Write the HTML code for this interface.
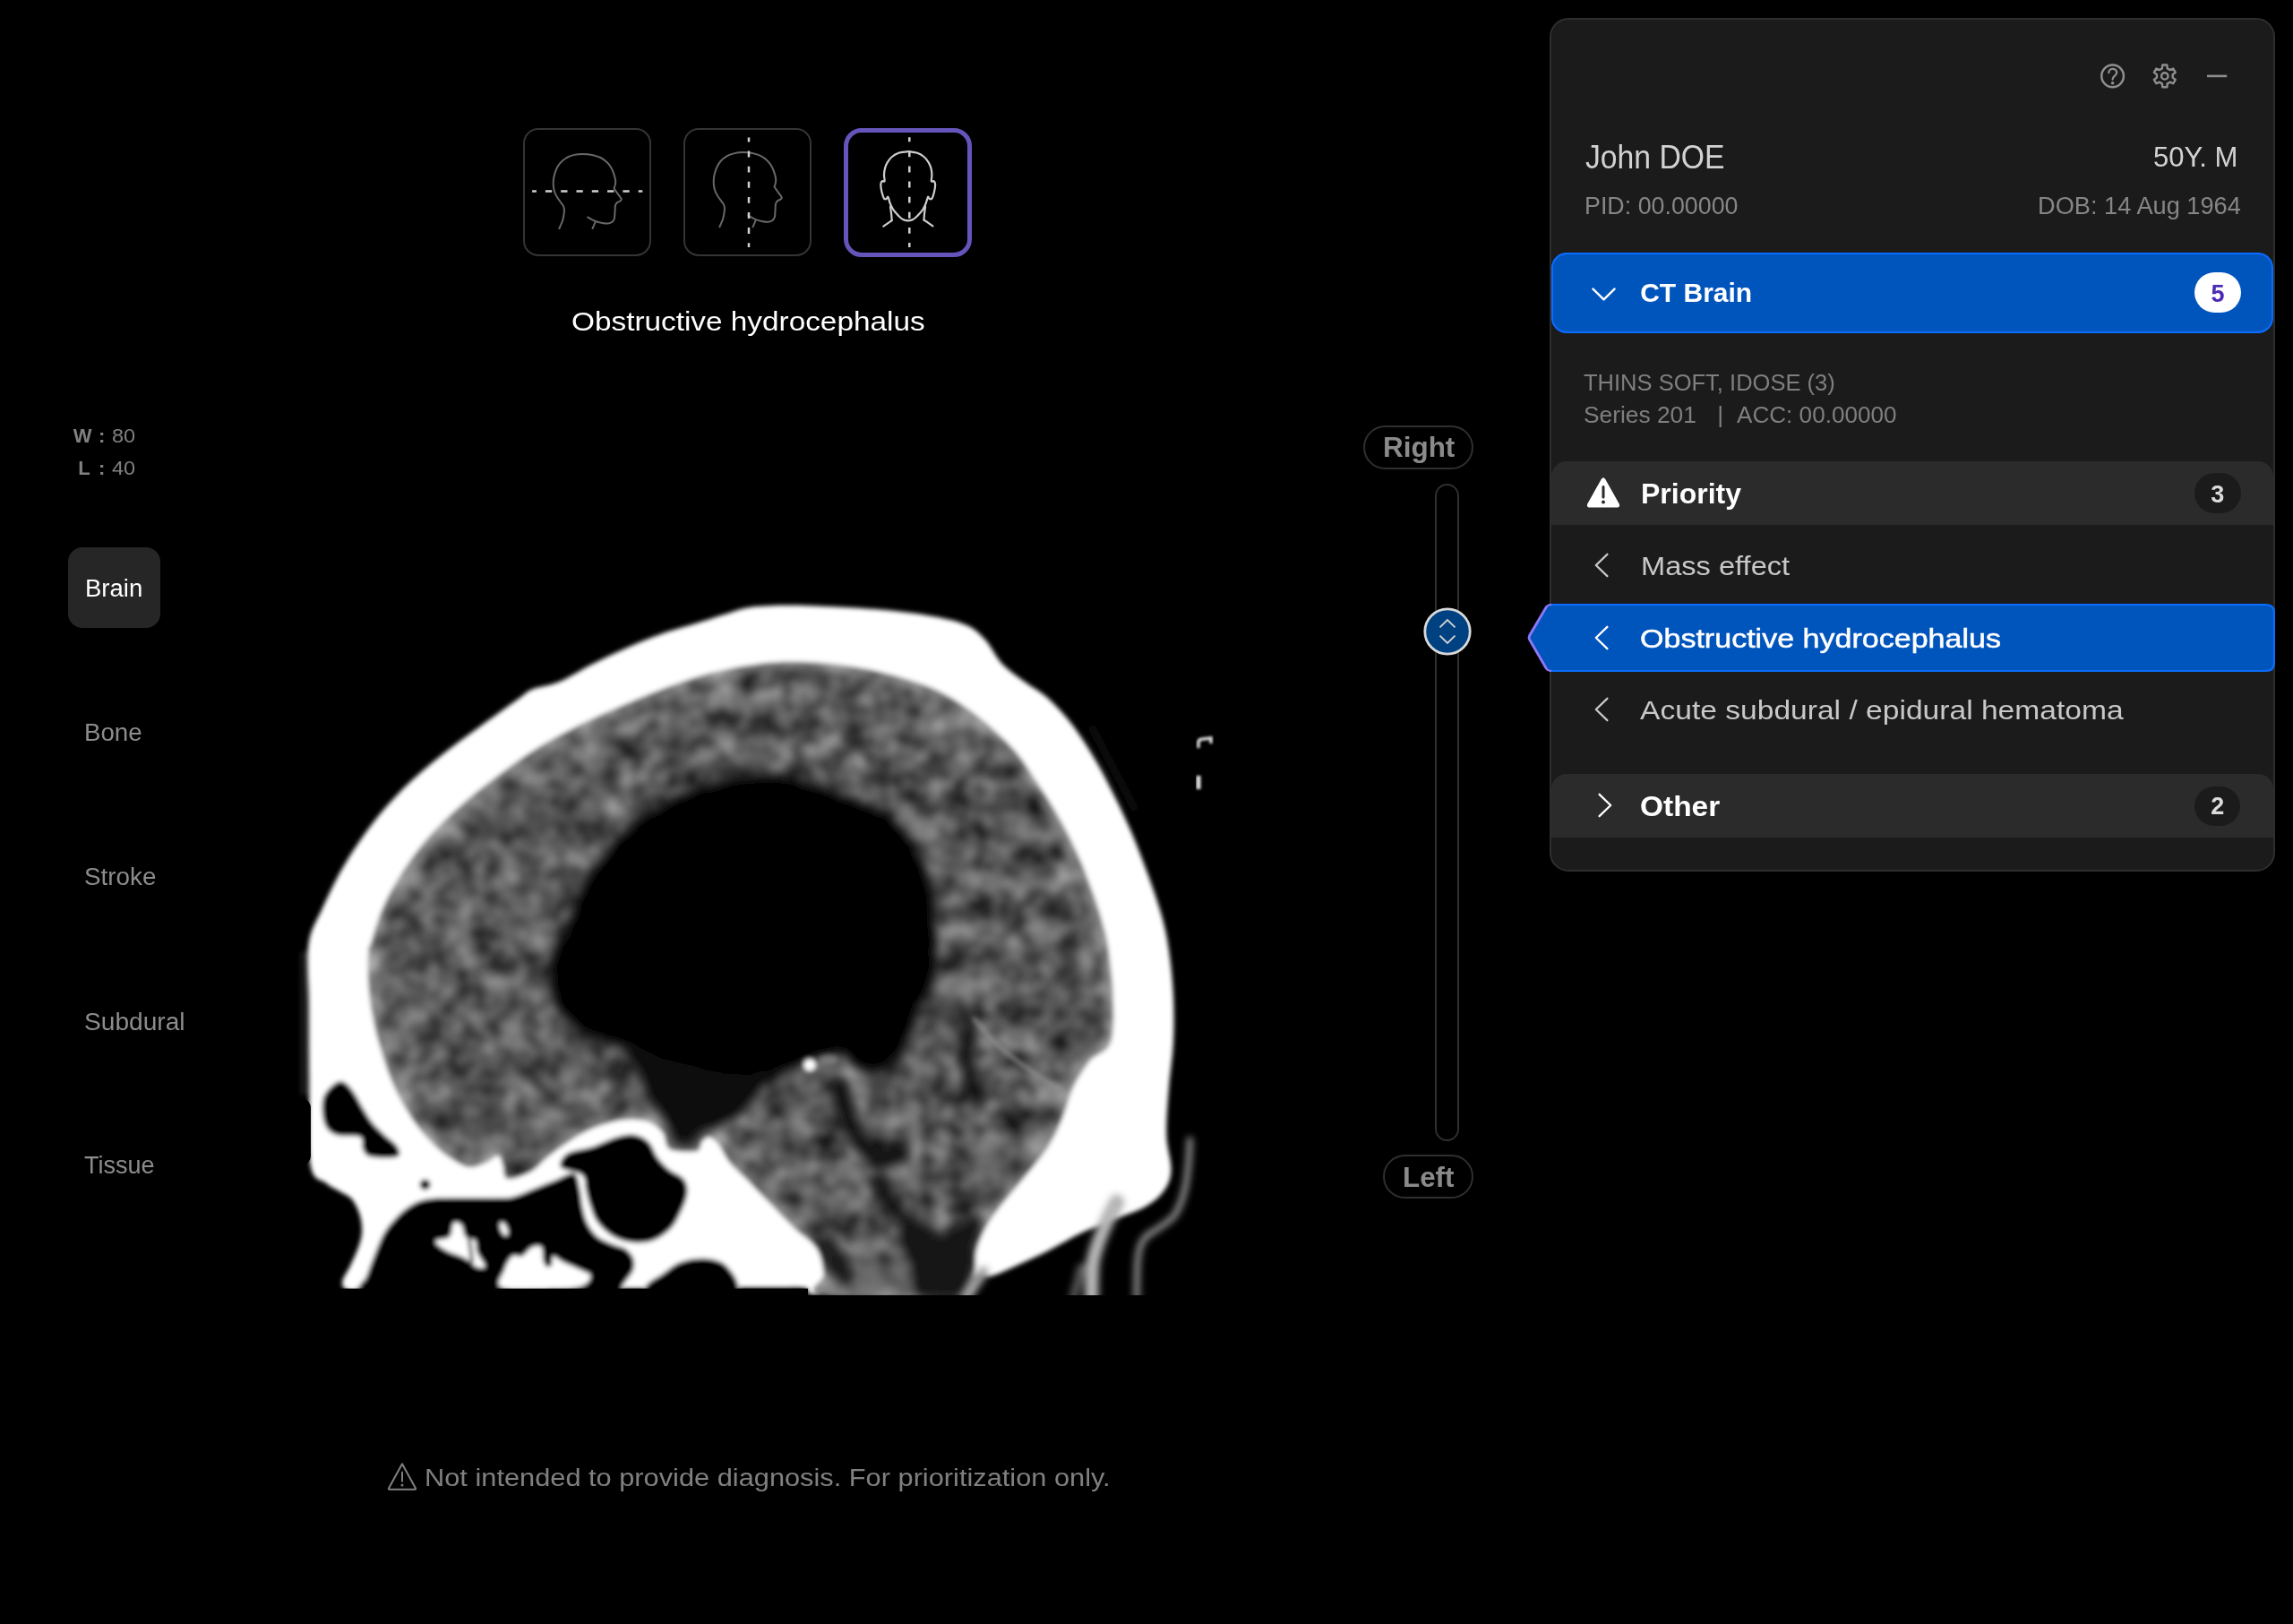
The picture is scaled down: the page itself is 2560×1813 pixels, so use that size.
<!DOCTYPE html>
<html lang="en"><head><meta charset="utf-8"><title>CT Brain viewer</title>
<style>
html,body{margin:0;padding:0;background:#000;}
body{width:2560px;height:1813px;position:relative;overflow:hidden;font-family:"Liberation Sans",sans-serif;}
.t{position:absolute;white-space:nowrap;line-height:1;transform-origin:0 0;}
.abs{position:absolute;}
.box{position:absolute;box-sizing:border-box;}
svg{position:absolute;overflow:visible;}
</style></head><body>

<svg width="2560" height="1813" viewBox="0 0 2560 1813" style="left:0;top:0">
<defs>
<filter id="bl" x="-5%" y="-5%" width="110%" height="110%"><feGaussianBlur stdDeviation="2.6"/></filter>
<filter id="bl2" x="-20%" y="-20%" width="140%" height="140%"><feGaussianBlur stdDeviation="5"/></filter>
<filter id="bl3" x="-10%" y="-10%" width="120%" height="120%"><feGaussianBlur stdDeviation="3.2"/></filter>
<filter id="bl6" x="-10%" y="-10%" width="120%" height="120%"><feGaussianBlur stdDeviation="6"/></filter>
<filter id="bl1" x="-20%" y="-20%" width="140%" height="140%"><feGaussianBlur stdDeviation="1.6"/></filter>
<filter id="tex" x="0" y="0" width="100%" height="100%" color-interpolation-filters="sRGB">
<feTurbulence type="fractalNoise" baseFrequency="0.034" numOctaves="2" seed="11" result="n"/>
<feColorMatrix in="n" type="matrix" values="0.6 0.28 0 0 -0.095  0.6 0.28 0 0 -0.095  0.6 0.28 0 0 -0.095  0 0 0 0 1" result="g"/>
<feComposite in="g" in2="SourceGraphic" operator="in"/>
</filter>
<clipPath id="ctclip"><rect x="330" y="640" width="1060" height="805.5"/></clipPath>
<clipPath id="brainclip"><path d="M411.2,1060.0C410.8,1067.5 410.3,1085.9 411.2,1098.8C412.1,1111.7 414.2,1126.0 416.4,1137.6C418.6,1149.2 421.2,1158.2 424.2,1168.6C427.2,1178.9 430.6,1189.8 434.5,1199.7C438.4,1209.6 442.2,1218.6 447.4,1228.1C452.6,1237.6 459.0,1248.0 465.5,1256.6C472.0,1265.2 479.3,1273.4 486.2,1279.9C493.1,1286.4 500.4,1291.5 506.9,1295.4C513.4,1299.3 519.0,1302.7 525.0,1303.1C531.0,1303.5 537.9,1300.2 543.1,1298.0C548.3,1295.8 553.1,1289.8 556.1,1290.2C559.1,1290.6 559.6,1296.3 561.3,1300.6C563.0,1304.9 561.2,1314.8 566.4,1316.1C571.6,1317.4 585.0,1312.2 592.3,1308.3C599.6,1304.4 603.9,1298.0 610.4,1292.8C616.9,1287.6 623.3,1282.5 631.1,1277.3C638.9,1272.1 648.4,1265.9 657.0,1261.8C665.6,1257.7 675.0,1254.7 682.8,1252.7C690.5,1250.8 696.6,1250.1 703.5,1250.1C710.4,1250.1 718.2,1250.3 724.2,1252.7C730.2,1255.1 736.2,1259.8 739.7,1264.3C743.2,1268.8 742.3,1276.5 744.9,1279.9C747.5,1283.4 749.7,1284.2 755.3,1285.0C760.9,1285.8 773.8,1286.7 778.5,1285.0C783.2,1283.3 781.5,1277.3 783.7,1274.7C785.9,1272.1 788.5,1269.1 791.5,1269.5C794.5,1269.9 797.9,1272.5 801.8,1277.3C805.7,1282.0 809.5,1291.5 814.7,1298.0C819.9,1304.5 825.4,1308.4 832.9,1316.1C840.4,1323.8 851.2,1335.0 860.0,1344.0C868.8,1353.0 877.3,1362.1 885.9,1370.4C894.5,1378.7 906.1,1385.1 911.7,1393.7C917.3,1402.3 918.4,1413.4 919.5,1422.1C920.6,1430.8 892.8,1442.0 918.2,1446.0C943.6,1450.0 1043.9,1450.0 1072.1,1446.0C1100.3,1442.0 1084.6,1430.4 1087.6,1422.1C1090.6,1413.8 1088.0,1404.9 1090.2,1396.3C1092.4,1387.7 1095.8,1379.0 1100.6,1370.4C1105.3,1361.8 1111.4,1354.0 1118.7,1344.5C1126.0,1335.0 1135.9,1324.3 1144.5,1313.5C1153.1,1302.7 1163.5,1290.7 1170.4,1279.9C1177.3,1269.1 1181.2,1260.0 1185.9,1248.8C1190.7,1237.6 1193.7,1223.4 1198.9,1212.6C1204.1,1201.8 1210.1,1192.4 1217.0,1184.2C1223.9,1176.0 1235.9,1175.6 1240.2,1163.5C1244.5,1151.4 1243.2,1129.0 1242.8,1111.7C1242.4,1094.5 1239.4,1072.7 1237.7,1060.0C1236.0,1047.3 1235.1,1045.5 1232.5,1035.8C1229.9,1026.1 1226.8,1015.5 1222.1,1002.1C1217.3,988.7 1210.5,970.2 1204.0,955.6C1197.5,941.0 1191.0,928.0 1183.3,914.2C1175.5,900.4 1166.1,885.7 1157.5,872.8C1148.9,859.9 1142.4,848.7 1131.6,836.6C1120.8,824.5 1105.7,810.8 1092.8,800.4C1079.9,790.0 1066.9,781.4 1054.0,774.5C1041.1,767.6 1030.3,763.7 1015.2,759.0C1000.1,754.3 980.8,749.3 963.5,746.1C946.2,742.9 929.0,740.7 911.7,739.6C894.5,738.5 877.9,738.1 860.0,739.6C842.1,741.1 822.3,744.5 804.4,748.6C786.5,752.7 770.0,758.2 752.7,764.2C735.5,770.2 718.1,777.6 700.9,784.9C683.6,792.2 666.4,799.5 649.2,808.1C632.0,816.7 613.5,826.7 597.5,836.6C581.5,846.5 567.7,856.8 553.5,867.6C539.3,878.4 525.0,889.6 512.1,901.3C499.2,912.9 486.7,925.0 475.9,937.5C465.1,950.0 455.6,963.4 447.4,976.3C439.2,989.2 432.3,1002.1 426.7,1015.0C421.1,1027.9 416.4,1046.4 413.8,1053.9C411.2,1061.4 411.6,1052.5 411.2,1060.0Z"/></clipPath>
</defs>
<g clip-path="url(#ctclip)">
<g filter="url(#bl)">
<path d="M388.7,1440.0C382.4,1438.6 381.8,1435.2 382.2,1430.8C382.6,1426.4 388.0,1419.6 390.9,1413.4C393.8,1407.2 397.4,1400.0 399.6,1393.8C401.8,1387.6 403.6,1382.5 404.0,1376.3C404.4,1370.1 403.6,1362.9 401.8,1356.7C400.0,1350.5 396.6,1343.4 393.0,1339.0C389.4,1334.6 384.7,1333.5 380.0,1330.5C375.3,1327.5 370.3,1326.3 364.7,1321.3C359.1,1316.3 349.8,1320.0 346.6,1300.6C343.4,1281.2 345.6,1235.0 345.3,1204.9C345.0,1174.8 345.1,1145.2 345.0,1120.0C344.9,1094.8 342.1,1071.4 344.5,1053.9C346.9,1036.4 353.1,1029.2 359.5,1015.0C365.9,1000.8 373.8,984.0 382.8,968.5C391.9,953.0 402.6,936.6 413.8,922.0C425.0,907.4 437.1,893.6 450.0,880.6C462.9,867.6 477.6,855.5 491.4,844.3C505.2,833.1 518.1,824.1 532.8,813.3C547.5,802.5 569.0,787.0 579.4,779.7C589.8,772.4 587.6,772.3 594.9,769.3C602.2,766.3 612.1,766.3 623.3,761.6C634.5,756.9 649.2,747.4 662.1,740.9C675.0,734.4 688.0,728.4 700.9,722.8C713.8,717.2 726.8,711.8 739.7,707.3C752.6,702.8 767.3,699.0 778.5,695.6C789.7,692.2 797.9,689.4 807.0,686.6C816.1,683.8 824.1,680.5 832.9,678.8C841.7,677.1 848.1,676.6 860.0,676.2C871.9,675.8 884.6,675.6 904.0,676.2C923.4,676.9 953.6,678.2 976.4,680.1C999.2,682.0 1023.8,684.9 1041.0,687.9C1058.2,690.9 1070.0,693.7 1079.9,698.2C1089.8,702.7 1094.1,707.9 1100.6,715.0C1107.1,722.1 1111.4,733.1 1118.7,740.9C1126.0,748.7 1135.9,755.1 1144.5,761.6C1153.1,768.1 1161.8,772.0 1170.4,779.7C1179.0,787.5 1187.7,796.9 1196.3,808.1C1204.9,819.3 1214.3,834.0 1222.1,846.9C1229.8,859.8 1235.9,871.9 1242.8,885.7C1249.7,899.5 1257.0,914.6 1263.5,929.7C1270.0,944.8 1276.0,960.8 1281.6,976.3C1287.2,991.8 1293.2,1008.8 1297.1,1022.8C1301.0,1036.8 1302.8,1045.2 1304.9,1060.0C1307.1,1074.8 1309.2,1094.5 1310.0,1111.7C1310.8,1129.0 1310.8,1146.2 1310.0,1163.5C1309.2,1180.8 1306.2,1198.0 1304.9,1215.2C1303.6,1232.4 1301.9,1251.8 1302.3,1266.9C1302.7,1282.0 1307.9,1295.4 1307.5,1305.7C1307.1,1316.0 1304.5,1322.1 1299.7,1329.0C1295.0,1335.9 1287.6,1341.9 1279.0,1347.1C1270.4,1352.3 1259.6,1355.2 1248.0,1360.0C1236.4,1364.8 1222.1,1369.5 1209.2,1375.6C1196.3,1381.6 1183.3,1389.8 1170.4,1396.3C1157.5,1402.8 1142.4,1409.7 1131.6,1414.4C1120.8,1419.1 1112.2,1423.4 1105.7,1424.7C1099.2,1426.0 1096.2,1421.2 1092.8,1422.1C1089.3,1423.0 1088.5,1426.0 1085.0,1430.0C1081.5,1434.0 1100.0,1443.3 1072.0,1446.0C1044.0,1448.7 945.7,1447.3 917.0,1446.0C888.3,1444.7 909.5,1439.4 900.0,1438.0C890.5,1436.6 893.3,1437.4 860.0,1437.5C826.7,1437.6 760.0,1438.3 700.0,1438.5C640.0,1438.7 546.7,1438.4 500.0,1438.5C453.3,1438.6 438.6,1438.8 420.0,1439.0C401.4,1439.2 395.0,1441.4 388.7,1440.0Z" fill="#fff"/>
<path d="M411.2,1060.0C410.8,1067.5 410.3,1085.9 411.2,1098.8C412.1,1111.7 414.2,1126.0 416.4,1137.6C418.6,1149.2 421.2,1158.2 424.2,1168.6C427.2,1178.9 430.6,1189.8 434.5,1199.7C438.4,1209.6 442.2,1218.6 447.4,1228.1C452.6,1237.6 459.0,1248.0 465.5,1256.6C472.0,1265.2 479.3,1273.4 486.2,1279.9C493.1,1286.4 500.4,1291.5 506.9,1295.4C513.4,1299.3 519.0,1302.7 525.0,1303.1C531.0,1303.5 537.9,1300.2 543.1,1298.0C548.3,1295.8 553.1,1289.8 556.1,1290.2C559.1,1290.6 559.6,1296.3 561.3,1300.6C563.0,1304.9 561.2,1314.8 566.4,1316.1C571.6,1317.4 585.0,1312.2 592.3,1308.3C599.6,1304.4 603.9,1298.0 610.4,1292.8C616.9,1287.6 623.3,1282.5 631.1,1277.3C638.9,1272.1 648.4,1265.9 657.0,1261.8C665.6,1257.7 675.0,1254.7 682.8,1252.7C690.5,1250.8 696.6,1250.1 703.5,1250.1C710.4,1250.1 718.2,1250.3 724.2,1252.7C730.2,1255.1 736.2,1259.8 739.7,1264.3C743.2,1268.8 742.3,1276.5 744.9,1279.9C747.5,1283.4 749.7,1284.2 755.3,1285.0C760.9,1285.8 773.8,1286.7 778.5,1285.0C783.2,1283.3 781.5,1277.3 783.7,1274.7C785.9,1272.1 788.5,1269.1 791.5,1269.5C794.5,1269.9 797.9,1272.5 801.8,1277.3C805.7,1282.0 809.5,1291.5 814.7,1298.0C819.9,1304.5 825.4,1308.4 832.9,1316.1C840.4,1323.8 851.2,1335.0 860.0,1344.0C868.8,1353.0 877.3,1362.1 885.9,1370.4C894.5,1378.7 906.1,1385.1 911.7,1393.7C917.3,1402.3 918.4,1413.4 919.5,1422.1C920.6,1430.8 892.8,1442.0 918.2,1446.0C943.6,1450.0 1043.9,1450.0 1072.1,1446.0C1100.3,1442.0 1084.6,1430.4 1087.6,1422.1C1090.6,1413.8 1088.0,1404.9 1090.2,1396.3C1092.4,1387.7 1095.8,1379.0 1100.6,1370.4C1105.3,1361.8 1111.4,1354.0 1118.7,1344.5C1126.0,1335.0 1135.9,1324.3 1144.5,1313.5C1153.1,1302.7 1163.5,1290.7 1170.4,1279.9C1177.3,1269.1 1181.2,1260.0 1185.9,1248.8C1190.7,1237.6 1193.7,1223.4 1198.9,1212.6C1204.1,1201.8 1210.1,1192.4 1217.0,1184.2C1223.9,1176.0 1235.9,1175.6 1240.2,1163.5C1244.5,1151.4 1243.2,1129.0 1242.8,1111.7C1242.4,1094.5 1239.4,1072.7 1237.7,1060.0C1236.0,1047.3 1235.1,1045.5 1232.5,1035.8C1229.9,1026.1 1226.8,1015.5 1222.1,1002.1C1217.3,988.7 1210.5,970.2 1204.0,955.6C1197.5,941.0 1191.0,928.0 1183.3,914.2C1175.5,900.4 1166.1,885.7 1157.5,872.8C1148.9,859.9 1142.4,848.7 1131.6,836.6C1120.8,824.5 1105.7,810.8 1092.8,800.4C1079.9,790.0 1066.9,781.4 1054.0,774.5C1041.1,767.6 1030.3,763.7 1015.2,759.0C1000.1,754.3 980.8,749.3 963.5,746.1C946.2,742.9 929.0,740.7 911.7,739.6C894.5,738.5 877.9,738.1 860.0,739.6C842.1,741.1 822.3,744.5 804.4,748.6C786.5,752.7 770.0,758.2 752.7,764.2C735.5,770.2 718.1,777.6 700.9,784.9C683.6,792.2 666.4,799.5 649.2,808.1C632.0,816.7 613.5,826.7 597.5,836.6C581.5,846.5 567.7,856.8 553.5,867.6C539.3,878.4 525.0,889.6 512.1,901.3C499.2,912.9 486.7,925.0 475.9,937.5C465.1,950.0 455.6,963.4 447.4,976.3C439.2,989.2 432.3,1002.1 426.7,1015.0C421.1,1027.9 416.4,1046.4 413.8,1053.9C411.2,1061.4 411.6,1052.5 411.2,1060.0Z" fill="#fff" filter="url(#tex)"/>
<g clip-path="url(#brainclip)">
<path d="M695.0,1166.0C697.2,1163.2 714.2,1174.0 725.0,1178.0C735.8,1182.0 748.3,1186.5 760.0,1190.0C771.7,1193.5 783.3,1197.0 795.0,1199.0C806.7,1201.0 818.2,1202.8 830.0,1202.0C841.8,1201.2 862.7,1191.8 866.0,1194.0C869.3,1196.2 856.0,1207.2 850.0,1215.0C844.0,1222.8 837.7,1234.1 830.0,1241.0C822.3,1247.9 811.3,1252.3 804.0,1256.6C796.7,1260.9 790.2,1262.4 786.0,1267.0C781.8,1271.6 783.7,1281.2 778.5,1284.0C773.3,1286.8 760.6,1287.3 755.0,1284.0C749.4,1280.7 747.5,1270.3 745.0,1264.0C742.5,1257.7 743.5,1252.4 740.0,1246.0C736.5,1239.6 728.7,1234.1 724.0,1225.5C719.3,1216.9 716.8,1204.4 712.0,1194.5C707.2,1184.6 692.8,1168.8 695.0,1166.0Z" fill="#0a0a0a" filter="url(#bl2)"/>
<path d="M411.2,1060.0C410.8,1067.5 410.3,1085.9 411.2,1098.8C412.1,1111.7 414.2,1126.0 416.4,1137.6C418.6,1149.2 421.2,1158.2 424.2,1168.6C427.2,1178.9 430.6,1189.8 434.5,1199.7C438.4,1209.6 442.2,1218.6 447.4,1228.1C452.6,1237.6 459.0,1248.0 465.5,1256.6C472.0,1265.2 479.3,1273.4 486.2,1279.9C493.1,1286.4 500.4,1291.5 506.9,1295.4C513.4,1299.3 519.0,1302.7 525.0,1303.1C531.0,1303.5 537.9,1300.2 543.1,1298.0C548.3,1295.8 553.1,1289.8 556.1,1290.2C559.1,1290.6 559.6,1296.3 561.3,1300.6C563.0,1304.9 561.2,1314.8 566.4,1316.1C571.6,1317.4 585.0,1312.2 592.3,1308.3C599.6,1304.4 603.9,1298.0 610.4,1292.8C616.9,1287.6 623.3,1282.5 631.1,1277.3C638.9,1272.1 648.4,1265.9 657.0,1261.8C665.6,1257.7 675.0,1254.7 682.8,1252.7C690.5,1250.8 696.6,1250.1 703.5,1250.1C710.4,1250.1 718.2,1250.3 724.2,1252.7C730.2,1255.1 736.2,1259.8 739.7,1264.3C743.2,1268.8 742.3,1276.5 744.9,1279.9C747.5,1283.4 749.7,1284.2 755.3,1285.0C760.9,1285.8 773.8,1286.7 778.5,1285.0C783.2,1283.3 781.5,1277.3 783.7,1274.7C785.9,1272.1 788.5,1269.1 791.5,1269.5C794.5,1269.9 797.9,1272.5 801.8,1277.3C805.7,1282.0 809.5,1291.5 814.7,1298.0C819.9,1304.5 825.4,1308.4 832.9,1316.1C840.4,1323.8 851.2,1335.0 860.0,1344.0C868.8,1353.0 877.3,1362.1 885.9,1370.4C894.5,1378.7 906.1,1385.1 911.7,1393.7C917.3,1402.3 918.4,1413.4 919.5,1422.1C920.6,1430.8 892.8,1442.0 918.2,1446.0C943.6,1450.0 1043.9,1450.0 1072.1,1446.0C1100.3,1442.0 1084.6,1430.4 1087.6,1422.1C1090.6,1413.8 1088.0,1404.9 1090.2,1396.3C1092.4,1387.7 1095.8,1379.0 1100.6,1370.4C1105.3,1361.8 1111.4,1354.0 1118.7,1344.5C1126.0,1335.0 1135.9,1324.3 1144.5,1313.5C1153.1,1302.7 1163.5,1290.7 1170.4,1279.9C1177.3,1269.1 1181.2,1260.0 1185.9,1248.8C1190.7,1237.6 1193.7,1223.4 1198.9,1212.6C1204.1,1201.8 1210.1,1192.4 1217.0,1184.2C1223.9,1176.0 1235.9,1175.6 1240.2,1163.5C1244.5,1151.4 1243.2,1129.0 1242.8,1111.7C1242.4,1094.5 1239.4,1072.7 1237.7,1060.0C1236.0,1047.3 1235.1,1045.5 1232.5,1035.8C1229.9,1026.1 1226.8,1015.5 1222.1,1002.1C1217.3,988.7 1210.5,970.2 1204.0,955.6C1197.5,941.0 1191.0,928.0 1183.3,914.2C1175.5,900.4 1166.1,885.7 1157.5,872.8C1148.9,859.9 1142.4,848.7 1131.6,836.6C1120.8,824.5 1105.7,810.8 1092.8,800.4C1079.9,790.0 1066.9,781.4 1054.0,774.5C1041.1,767.6 1030.3,763.7 1015.2,759.0C1000.1,754.3 980.8,749.3 963.5,746.1C946.2,742.9 929.0,740.7 911.7,739.6C894.5,738.5 877.9,738.1 860.0,739.6C842.1,741.1 822.3,744.5 804.4,748.6C786.5,752.7 770.0,758.2 752.7,764.2C735.5,770.2 718.1,777.6 700.9,784.9C683.6,792.2 666.4,799.5 649.2,808.1C632.0,816.7 613.5,826.7 597.5,836.6C581.5,846.5 567.7,856.8 553.5,867.6C539.3,878.4 525.0,889.6 512.1,901.3C499.2,912.9 486.7,925.0 475.9,937.5C465.1,950.0 455.6,963.4 447.4,976.3C439.2,989.2 432.3,1002.1 426.7,1015.0C421.1,1027.9 416.4,1046.4 413.8,1053.9C411.2,1061.4 411.6,1052.5 411.2,1060.0Z" fill="none" stroke="#fff" stroke-width="16" opacity="0.3" filter="url(#bl6)"/>
<path d="M631.0,1040.0C635.7,1028.3 638.0,1014.9 644.0,1002.1C650.0,989.3 657.8,976.2 667.3,963.3C676.8,950.4 688.8,935.3 700.9,924.5C713.0,913.7 726.8,906.0 739.7,898.7C752.6,891.4 765.6,885.4 778.5,880.6C791.4,875.9 803.7,872.8 817.3,870.2C830.9,867.6 846.4,864.6 860.0,865.0C873.6,865.4 885.9,869.3 898.8,872.8C911.7,876.2 924.7,881.0 937.6,885.7C950.5,890.5 965.6,895.7 976.4,901.3C987.2,906.9 995.0,912.1 1002.3,919.4C1009.6,926.7 1014.8,935.7 1020.4,945.2C1026.0,954.7 1032.0,964.6 1035.9,976.3C1039.8,987.9 1042.0,1001.1 1043.7,1015.1C1045.4,1029.0 1046.6,1046.0 1046.2,1060.0C1045.8,1074.0 1044.5,1087.6 1041.1,1098.8C1037.6,1110.0 1029.8,1117.4 1025.5,1127.3C1021.2,1137.2 1018.6,1149.7 1015.2,1158.3C1011.8,1166.9 1010.1,1173.0 1004.9,1179.0C999.7,1185.0 992.0,1192.3 984.2,1194.5C976.4,1196.7 966.1,1195.2 958.3,1191.9C950.5,1188.7 945.4,1176.7 937.6,1175.0C929.8,1173.3 920.3,1178.3 911.7,1181.6C903.1,1184.8 894.5,1191.3 885.9,1194.5C877.3,1197.7 869.3,1198.9 860.0,1201.0C850.7,1203.1 840.8,1206.5 830.0,1207.0C819.2,1207.5 806.7,1206.0 795.0,1204.0C783.3,1202.0 771.7,1198.5 760.0,1195.0C748.3,1191.5 734.8,1187.0 725.0,1183.0C715.2,1179.0 709.3,1174.2 701.0,1171.0C692.7,1167.8 684.1,1166.9 675.0,1163.5C665.9,1160.1 654.8,1156.1 646.6,1150.5C638.4,1144.9 631.4,1138.6 626.0,1130.0C620.6,1121.4 615.7,1108.7 614.0,1099.0C612.3,1089.3 613.2,1081.8 616.0,1072.0C618.8,1062.2 626.3,1051.7 631.0,1040.0Z" fill="#050505" filter="url(#bl6)"/>
<g filter="url(#bl2)">
<path d="M1004.9,1370.4C1009.2,1366.1 1026.4,1385.5 1041.1,1383.3C1055.7,1381.2 1084.6,1355.3 1092.8,1357.5C1101.0,1359.6 1091.1,1385.5 1090.2,1396.3C1089.3,1407.0 1090.6,1413.5 1087.6,1422.1C1084.6,1430.8 1082.5,1443.7 1072.1,1448.0C1061.8,1452.3 1035.0,1454.5 1025.5,1448.0C1016.1,1441.5 1018.6,1422.1 1015.2,1409.2C1011.8,1396.3 1000.5,1374.7 1004.9,1370.4Z" fill="#0d0d0d" opacity="0.9"/>
<path d="M906.6,1378.2C909.1,1375.1 920.8,1379.0 927.3,1383.3C933.7,1387.6 941.9,1396.7 945.4,1404.0C948.8,1411.4 951.0,1424.3 947.9,1427.3C944.9,1430.3 933.3,1426.4 927.3,1422.1C921.2,1417.8 915.2,1408.8 911.7,1401.4C908.3,1394.1 904.0,1381.2 906.6,1378.2Z" fill="#0d0d0d" opacity="0.85"/>
<path d="M937.6,1215.2C939.3,1221.2 943.6,1241.1 947.9,1251.4C952.3,1261.8 957.4,1270.4 963.5,1277.3C969.5,1284.2 977.3,1291.1 984.2,1292.8C991.1,1294.5 1001.4,1288.5 1004.9,1287.6" fill="none" stroke="#0a0a0a" stroke-width="20" stroke-linecap="round" opacity="0.9"/>
<path d="M1082.5,1150.5C1082.0,1156.1 1078.6,1171.7 1079.9,1184.2C1081.2,1196.7 1088.5,1218.6 1090.2,1225.5" fill="none" stroke="#101010" stroke-width="16" stroke-linecap="round" opacity="0.85"/>
<path d="M984.2,1321.3C985.9,1325.1 989.3,1337.2 994.5,1344.5C999.7,1351.9 1007.4,1359.6 1015.2,1365.2C1023.0,1370.8 1036.8,1376.0 1041.1,1378.2" fill="none" stroke="#0c0c0c" stroke-width="18" stroke-linecap="round" opacity="0.85"/>
<ellipse cx="578" cy="1306" rx="14" ry="10" fill="#111" opacity="0.8"/>
</g>
<path d="M1087.6,1137.6C1092.8,1143.2 1105.7,1160.0 1118.7,1171.2C1131.6,1182.4 1154.0,1197.5 1165.2,1204.9C1176.4,1212.2 1182.5,1213.5 1185.9,1215.2" fill="none" stroke="#9a9a9a" stroke-width="3" stroke-linecap="round" opacity="0.8"/>
<circle cx="904" cy="1189" r="6.5" fill="#fff"/><ellipse cx="925" cy="1183" rx="10" ry="5" fill="#8a8a8a" opacity="0.7"/>
<ellipse cx="985" cy="1432" rx="34" ry="22" fill="#7a7a7a" opacity="0.55" filter="url(#bl2)"/>
</g>
<path d="M360.8,1225.5C362.9,1218.0 370.9,1211.5 375.0,1208.7C379.1,1205.9 381.9,1206.8 385.4,1208.7C388.8,1210.7 392.3,1215.4 395.7,1220.4C399.2,1225.3 402.6,1232.9 406.1,1238.5C409.5,1244.1 412.5,1249.3 416.4,1254.0C420.3,1258.7 424.8,1262.6 429.3,1266.9C433.9,1271.2 441.2,1275.8 443.6,1279.9C445.9,1284.0 448.5,1289.6 443.6,1291.5C438.6,1293.4 420.3,1293.0 413.8,1291.5C407.3,1290.0 406.7,1286.1 404.8,1282.5C402.8,1278.8 407.1,1272.1 402.2,1269.5C397.2,1266.9 381.7,1269.5 375.0,1266.9C368.3,1264.3 364.5,1260.9 362.1,1254.0C359.7,1247.1 358.6,1233.1 360.8,1225.5Z" fill="#000"/>
<path d="M429.3,1375.6C431.5,1372.0 432.9,1369.6 436.7,1365.4C440.5,1361.2 445.8,1354.6 452.0,1350.2C458.2,1345.8 464.0,1341.4 473.8,1339.2C483.6,1337.0 496.3,1337.4 510.8,1337.1C525.3,1336.8 550.1,1337.5 561.0,1337.1C571.9,1336.7 570.1,1336.7 576.3,1334.9C582.5,1333.1 590.7,1329.1 598.0,1326.2C605.3,1323.3 612.7,1320.1 619.9,1317.4C627.1,1314.7 636.4,1308.2 641.0,1310.0C645.6,1311.8 645.9,1322.0 647.5,1328.3C649.1,1334.6 649.1,1341.7 650.5,1348.0C651.9,1354.3 653.2,1360.6 656.0,1366.0C658.8,1371.4 662.2,1376.6 667.0,1380.5C671.8,1384.4 679.8,1387.2 685.0,1389.5C690.2,1391.8 694.3,1391.5 698.0,1394.0C701.7,1396.5 705.6,1400.7 707.1,1404.7C708.6,1408.7 708.6,1413.5 707.1,1417.8C705.6,1422.1 700.6,1427.3 698.4,1430.8C696.2,1434.2 695.4,1433.6 694.0,1438.5C692.6,1443.4 739.3,1456.4 690.0,1460.0C640.7,1463.6 446.0,1464.1 398.0,1460.0C350.0,1455.9 400.1,1440.8 401.8,1435.2C403.5,1429.6 406.1,1430.9 408.3,1426.5C410.5,1422.1 412.3,1415.5 414.9,1409.0C417.4,1402.5 421.2,1392.8 423.6,1387.2C426.0,1381.6 427.1,1379.2 429.3,1375.6Z" fill="#000"/>
<path d="M625.9,1303.1C623.2,1299.0 627.7,1291.5 633.7,1287.6C639.7,1283.7 653.1,1282.9 662.1,1279.9C671.1,1276.9 680.2,1271.7 688.0,1269.5C695.8,1267.3 702.7,1266.0 708.7,1266.9C714.7,1267.8 719.9,1270.4 724.2,1274.7C728.5,1279.0 730.7,1287.6 734.6,1292.8C738.5,1298.0 743.1,1302.5 747.5,1306.0C751.9,1309.5 757.8,1311.3 761.0,1314.0C764.2,1316.7 765.5,1318.5 766.5,1322.0C767.5,1325.5 768.2,1329.5 767.0,1334.9C765.8,1340.3 762.5,1348.3 759.4,1354.5C756.3,1360.7 753.6,1366.9 748.5,1372.0C743.4,1377.1 735.8,1382.5 728.9,1385.0C722.0,1387.5 714.4,1387.9 707.1,1387.2C699.8,1386.5 692.0,1384.5 685.3,1380.7C678.6,1376.9 671.5,1370.5 667.0,1364.5C662.5,1358.5 660.7,1351.1 658.5,1345.0C656.3,1338.9 655.4,1333.5 654.0,1328.0C652.6,1322.5 654.7,1316.2 650.0,1312.0C645.3,1307.8 628.6,1307.2 625.9,1303.1Z" fill="#000"/>
<path d="M722.0,1460.0C704.4,1456.2 717.2,1443.3 720.2,1437.0C723.2,1430.7 733.3,1426.8 739.8,1422.1C746.3,1417.4 752.1,1411.9 759.4,1409.0C766.7,1406.1 775.8,1404.7 783.4,1404.7C791.0,1404.7 799.4,1406.1 805.2,1409.0C811.0,1411.9 815.0,1417.4 818.3,1422.1C821.6,1426.8 823.5,1431.1 824.8,1437.4C826.1,1443.7 843.1,1456.2 826.0,1460.0C808.9,1463.8 739.6,1463.8 722.0,1460.0Z" fill="#000"/>
<circle cx="474.6" cy="1322.5" r="6" fill="#000"/>
<path d="M486.8,1385.0C488.6,1383.2 498.8,1384.0 502.1,1380.7C505.4,1377.4 504.3,1367.6 506.5,1365.4C508.7,1363.2 513.0,1365.0 515.2,1367.6C517.4,1370.1 517.1,1377.8 519.6,1380.7C522.1,1383.6 528.3,1382.1 530.5,1385.0C532.7,1387.9 530.8,1393.4 532.6,1398.1C534.4,1402.8 541.4,1410.7 541.4,1413.4C541.4,1416.1 536.2,1416.0 532.6,1414.5C529.0,1413.0 524.7,1407.4 519.6,1404.7C514.5,1402.0 506.8,1400.3 502.1,1398.1C497.4,1395.9 493.8,1393.8 491.2,1391.6C488.6,1389.4 485.0,1386.8 486.8,1385.0Z" fill="#fff"/>
<path d="M561.0,1437.4C551.5,1434.0 561.4,1423.6 563.2,1417.8C565.0,1412.0 568.6,1405.0 571.9,1402.5C575.2,1400.0 579.2,1404.1 582.8,1402.5C586.4,1400.9 590.1,1394.3 593.7,1392.7C597.3,1391.1 602.4,1390.0 604.6,1392.7C606.8,1395.4 605.0,1405.5 606.8,1409.0C608.6,1412.5 613.7,1414.5 615.5,1413.4C617.3,1412.3 615.5,1403.2 617.7,1402.5C619.9,1401.8 623.5,1406.5 628.6,1409.0C633.7,1411.5 643.1,1415.2 648.2,1417.8C653.3,1420.3 658.7,1421.4 659.1,1424.3C659.5,1427.2 656.9,1432.8 650.4,1435.2C643.9,1437.6 634.8,1438.1 619.9,1438.5C605.0,1438.9 570.5,1440.9 561.0,1437.4Z" fill="#fff"/>
<ellipse cx="562.6" cy="1372" rx="3.6" ry="8" fill="#fff" transform="rotate(-22 562.6 1372)"/>
<path d="M524,1384 L527,1408" stroke="#000" stroke-width="3.5" stroke-linecap="round"/>
<path d="M611,1404 L611,1412" stroke="#000" stroke-width="5" stroke-linecap="round"/>
<g filter="url(#bl3)">
<path d="M1246.8,1342.0C1244.8,1346.0 1238.5,1358.3 1235.0,1366.0C1231.5,1373.7 1228.5,1380.9 1226.0,1388.3C1223.5,1395.7 1221.2,1400.2 1220.0,1410.5C1218.8,1420.8 1218.9,1443.4 1218.7,1450.0" fill="none" stroke="#a0a0a0" stroke-width="16" stroke-linecap="round"/>
<path d="M1246.8,1342.0C1244.8,1346.0 1238.5,1358.3 1235.0,1366.0C1231.5,1373.7 1228.5,1380.9 1226.0,1388.3C1223.5,1395.7 1221.2,1400.2 1220.0,1410.5C1218.8,1420.8 1218.9,1443.4 1218.7,1450.0" fill="none" stroke="#c4c4c4" stroke-width="6" stroke-linecap="round"/>
<path d="M1207.0,1415.0C1206.3,1417.8 1204.5,1426.2 1203.0,1432.0C1201.5,1437.8 1198.8,1447.0 1198.0,1450.0" fill="none" stroke="#5a5a5a" stroke-width="9" stroke-linecap="round"/>
<path d="M1328.4,1272.6C1328.2,1277.0 1327.9,1289.9 1326.9,1299.3C1325.9,1308.7 1325.0,1319.6 1322.5,1329.0C1320.0,1338.4 1316.7,1348.8 1312.0,1355.7C1307.3,1362.6 1300.0,1366.0 1294.3,1370.5C1288.6,1375.0 1282.0,1377.0 1278.0,1382.4C1274.0,1387.8 1272.1,1391.8 1270.6,1403.1C1269.1,1414.4 1269.3,1442.2 1269.0,1450.0" fill="none" stroke="#7a7a7a" stroke-width="7" stroke-linecap="round"/>
<path d="M1328.4,1272.6C1328.2,1277.0 1327.9,1289.9 1326.9,1299.3C1325.9,1308.7 1325.0,1319.6 1322.5,1329.0C1320.0,1338.4 1316.7,1348.8 1312.0,1355.7C1307.3,1362.6 1300.0,1366.0 1294.3,1370.5C1288.6,1375.0 1282.0,1377.0 1278.0,1382.4C1274.0,1387.8 1272.1,1391.8 1270.6,1403.1C1269.1,1414.4 1269.3,1442.2 1269.0,1450.0" fill="none" stroke="#a8a8a8" stroke-width="3" stroke-linecap="round"/>
<path d="M1098.0,1420.0C1096.3,1422.3 1091.3,1429.0 1088.0,1434.0C1084.7,1439.0 1079.7,1447.3 1078.0,1450.0" fill="none" stroke="#a0a0a0" stroke-width="12" stroke-linecap="round"/>
<path d="M1218,810 L1245,862 L1268,905" fill="none" stroke="#151515" stroke-width="5"/>
</g>
<rect x="335" y="1062" width="9" height="160" fill="#444" opacity="0.35"/>
</g>
<rect x="330" y="1438.6" width="572" height="10" fill="#000"/>
<g filter="url(#bl1)"><path d="M1338,835 L1338,828 Q1339,825 1343,825 L1352,824 L1352,830" fill="none" stroke="#e0e0e0" stroke-width="3.5"/><path d="M1338,866 L1338,881" stroke="#e8e8e8" stroke-width="5"/></g>
</g>
</svg>
<div class="box" style="left:584px;top:143px;width:143px;height:143px;border:2px solid #343434;border-radius:17px"></div>
<div class="box" style="left:763px;top:143px;width:143px;height:143px;border:2px solid #343434;border-radius:17px"></div>
<div class="box" style="left:942px;top:142.5px;width:143px;height:144px;border:5px solid #6554ba;border-radius:20px"></div>
<svg width="2560" height="1813" viewBox="0 0 2560 1813" style="left:0;top:0" fill="none" stroke-linecap="round" stroke-linejoin="round">
<path d="M656.3,242.5C657.6,243.2 661.5,245.6 664.2,246.7C666.9,247.8 670.1,248.6 672.6,249.1C675.0,249.6 677.0,249.7 678.8,249.5C680.7,249.3 682.4,248.6 683.5,247.7C684.7,246.8 685.5,245.5 685.9,244.1C686.4,242.6 686.2,240.6 686.4,238.8C686.5,237.1 686.6,235.2 686.7,233.6C686.8,232.0 686.6,230.6 687.0,229.4C687.3,228.2 688.0,227.1 688.8,226.3C689.6,225.5 691.1,225.3 691.9,224.7C692.8,224.1 693.7,223.4 693.8,222.6C693.9,221.8 693.2,221.1 692.4,220.0C691.7,218.9 690.3,217.1 689.3,215.8C688.3,214.5 687.3,213.1 686.7,212.1C686.1,211.2 685.6,210.9 685.6,210.1C685.6,209.2 686.4,208.2 686.7,206.9C686.9,205.6 687.4,204.2 687.2,202.2C687.0,200.2 686.4,197.3 685.6,194.9C684.8,192.4 683.8,189.8 682.5,187.6C681.2,185.3 679.8,183.2 677.8,181.3C675.8,179.4 673.3,177.4 670.5,176.0C667.7,174.6 664.4,173.6 661.0,172.9C657.7,172.2 653.9,171.9 650.6,171.9C647.3,171.9 644.1,172.2 641.2,172.9C638.2,173.6 635.4,174.6 632.8,176.0C630.2,177.5 627.5,179.5 625.5,181.8C623.5,184.1 621.9,186.9 620.8,189.6C619.6,192.4 618.9,195.4 618.3,198.0C617.8,200.6 617.7,202.9 617.7,205.3C617.8,207.8 618.1,210.4 618.7,212.7C619.3,214.9 620.1,216.9 621.3,218.9C622.4,221.0 624.2,223.5 625.5,225.2C626.7,227.0 627.9,228.1 628.6,229.4C629.3,230.7 629.7,231.5 629.9,233.1C630.0,234.6 629.9,236.7 629.6,238.8C629.4,241.0 628.7,244.1 628.1,246.2C627.5,248.3 626.6,249.9 626.0,251.4C625.4,252.9 624.7,254.4 624.4,255.1" stroke="#686868" stroke-width="2"/>
<path d="M664.7,247.7C664.4,248.3 663.7,250.2 663.1,251.4C662.6,252.6 661.8,254.4 661.6,255.1" stroke="#686868" stroke-width="2"/>
<path d="M835.3,240.7C836.6,241.4 840.5,243.8 843.2,244.9C845.9,246.0 849.1,246.8 851.6,247.3C854.0,247.8 856.0,247.9 857.8,247.7C859.7,247.5 861.4,246.8 862.5,245.9C863.7,245.0 864.5,243.7 864.9,242.3C865.4,240.8 865.2,238.8 865.4,237.0C865.5,235.3 865.6,233.4 865.7,231.8C865.8,230.2 865.6,228.8 866.0,227.6C866.3,226.4 867.0,225.3 867.8,224.5C868.6,223.7 870.1,223.5 870.9,222.9C871.8,222.3 872.7,221.6 872.8,220.8C872.9,220.0 872.2,219.3 871.4,218.2C870.7,217.1 869.3,215.3 868.3,214.0C867.3,212.7 866.3,211.3 865.7,210.3C865.1,209.4 864.6,209.1 864.6,208.3C864.6,207.4 865.4,206.4 865.7,205.1C865.9,203.8 866.4,202.4 866.2,200.4C866.0,198.4 865.4,195.5 864.6,193.1C863.8,190.6 862.8,188.0 861.5,185.8C860.2,183.5 858.8,181.4 856.8,179.5C854.8,177.6 852.3,175.6 849.5,174.2C846.7,172.8 843.4,171.8 840.0,171.1C836.7,170.4 832.9,170.1 829.6,170.1C826.3,170.1 823.1,170.4 820.2,171.1C817.2,171.8 814.4,172.8 811.8,174.2C809.2,175.7 806.5,177.7 804.5,180.0C802.5,182.3 800.9,185.1 799.8,187.8C798.6,190.6 797.9,193.6 797.3,196.2C796.8,198.8 796.7,201.1 796.7,203.5C796.8,206.0 797.1,208.6 797.7,210.9C798.3,213.1 799.1,215.1 800.3,217.1C801.4,219.2 803.2,221.7 804.5,223.4C805.7,225.2 806.9,226.3 807.6,227.6C808.3,228.9 808.7,229.7 808.9,231.3C809.0,232.8 808.9,234.9 808.6,237.0C808.4,239.2 807.7,242.3 807.1,244.4C806.5,246.5 805.6,248.1 805.0,249.6C804.4,251.1 803.7,252.6 803.4,253.3" stroke="#686868" stroke-width="2"/>
<path d="M843.7,245.9C843.4,246.5 842.7,248.4 842.1,249.6C841.6,250.8 840.8,252.6 840.6,253.3" stroke="#686868" stroke-width="2"/>
<g stroke="#cfcfcf" stroke-width="2.5" stroke-linecap="butt">
<line x1="594.1" y1="213.4" x2="717.3" y2="213.4" stroke-dasharray="7.3 10" stroke-dashoffset="2.5"/>
<line x1="836" y1="153.5" x2="836" y2="276" stroke-dasharray="6.9 10.2" stroke-dashoffset="2"/>
<line x1="1015.3" y1="153.3" x2="1015.3" y2="276" stroke-dasharray="6.9 10.2" stroke-dashoffset="2"/>
</g>
<path d="M1015.3,169.2C1017.6,169.5 1021.5,169.9 1024.2,170.8C1026.9,171.8 1029.4,173.3 1031.5,175.0C1033.6,176.7 1035.4,179.2 1036.7,181.3C1038.0,183.4 1038.7,185.3 1039.4,187.6C1040.0,189.8 1040.3,192.4 1040.4,194.9C1040.5,197.3 1039.5,201.0 1039.9,202.2C1040.2,203.4 1041.8,201.7 1042.5,202.2C1043.2,202.7 1043.9,203.8 1044.1,205.3C1044.2,206.9 1043.9,209.5 1043.5,211.6C1043.2,213.7 1042.5,216.2 1042.0,217.9C1041.4,219.6 1041.1,220.9 1040.4,221.6C1039.7,222.3 1038.5,222.4 1037.8,222.1C1037.1,221.7 1036.7,219.5 1036.2,219.5C1035.8,219.5 1035.6,220.8 1035.2,222.1C1034.7,223.4 1034.4,225.4 1033.6,227.3C1032.8,229.2 1031.7,231.7 1030.5,233.6C1029.2,235.5 1027.7,237.3 1026.3,238.8C1024.9,240.4 1023.5,241.9 1022.1,243.0C1020.7,244.2 1019.3,245.1 1017.9,245.6C1016.5,246.2 1015.1,246.4 1013.7,246.4C1012.3,246.4 1010.9,246.2 1009.5,245.6C1008.1,245.1 1006.7,244.2 1005.3,243.0C1004.0,241.9 1002.6,240.4 1001.2,238.8C999.8,237.3 998.2,235.5 997.0,233.6C995.8,231.7 994.6,229.2 993.8,227.3C993.0,225.4 992.7,223.4 992.3,222.1C991.8,220.8 991.7,219.5 991.2,219.5C990.8,219.5 990.3,221.7 989.6,222.1C989.0,222.4 987.7,222.3 987.0,221.6C986.3,220.9 986.0,219.6 985.5,217.9C984.9,216.2 984.2,213.7 983.9,211.6C983.5,209.5 983.2,206.9 983.4,205.3C983.5,203.8 984.2,202.7 984.9,202.2C985.6,201.7 987.2,203.4 987.6,202.2C987.9,201.0 986.9,197.3 987.0,194.9C987.1,192.4 987.5,189.8 988.1,187.6C988.7,185.3 989.4,183.4 990.7,181.3C992.0,179.2 993.8,176.7 995.9,175.0C998.0,173.3 1000.8,171.7 1003.3,170.8C1005.7,169.9 1008.6,169.8 1010.6,169.6C1012.6,169.3 1013.0,169.0 1015.3,169.2Z" stroke="#cdcdcd" stroke-width="2.2"/>
<path d="M1033.1,230.5C1032.9,231.9 1032.3,236.3 1032.0,238.8C1031.8,241.4 1031.6,244.5 1031.5,245.6" stroke="#cdcdcd" stroke-width="2.2"/>
<path d="M994.0,230.5C994.2,231.9 994.8,236.2 995.1,238.8C995.4,241.4 995.6,244.9 995.7,246.2" stroke="#cdcdcd" stroke-width="2.2"/>
<path d="M1031.5,245.6 L1035.7,248.3 L1041.4,252.4" stroke="#cdcdcd" stroke-width="2.2"/>
<path d="M995.7,246.2 L991.7,248.8 L986.3,252.6" stroke="#cdcdcd" stroke-width="2.2"/>
</svg>
<div class="t" style="left:637.60px;top:343.71px;font-size:30px;color:#ffffff;transform:scaleX(1.1110);">Obstructive hydrocephalus</div>
<div class="t" style="left:81.80px;top:475.98px;font-size:22px;color:#808080;font-weight:bold;">W</div>
<div class="t" style="left:110.10px;top:475.98px;font-size:22px;color:#808080;font-weight:bold;">:</div>
<div class="t" style="left:125.10px;top:475.98px;font-size:22px;color:#808080;transform:scaleX(1.0667);">80</div>
<div class="t" style="left:87.30px;top:512.08px;font-size:22px;color:#808080;font-weight:bold;">L</div>
<div class="t" style="left:110.10px;top:512.08px;font-size:22px;color:#808080;font-weight:bold;">:</div>
<div class="t" style="left:125.10px;top:512.08px;font-size:22px;color:#808080;transform:scaleX(1.0667);">40</div>
<div class="box" style="left:76px;top:611px;width:103px;height:90px;background:#262626;border-radius:16px"></div>
<div class="t" style="left:95.10px;top:644.14px;font-size:27px;color:#ffffff;transform:scaleX(1.0190);">Brain</div>
<div class="t" style="left:94.00px;top:805.04px;font-size:27px;color:#8c8c8c;transform:scaleX(1.0254);">Bone</div>
<div class="t" style="left:94.00px;top:965.74px;font-size:27px;color:#8c8c8c;transform:scaleX(1.0295);">Stroke</div>
<div class="t" style="left:94.00px;top:1127.54px;font-size:27px;color:#8c8c8c;transform:scaleX(1.0417);">Subdural</div>
<div class="t" style="left:94.00px;top:1288.24px;font-size:27px;color:#8c8c8c;">Tissue</div>
<div class="box" style="left:290px;top:1225.5px;width:56.6px;height:75px;background:#000;border-radius:11px"></div>
<div class="box" style="left:1522px;top:474.5px;width:122.5px;height:49.5px;border:2px solid #2f2f2f;border-radius:25px"></div>
<div class="t" style="left:1543.80px;top:483.66px;font-size:31px;color:#8a8a8a;font-weight:bold;transform:scaleX(1.0139);">Right</div>
<div class="box" style="left:1602.3px;top:539.5px;width:27px;height:734.2px;border:2px solid #2f2f2f;border-radius:14px"></div>
<div class="box" style="left:1544.2px;top:1289.2px;width:100.4px;height:49.3px;border:2px solid #2f2f2f;border-radius:25px"></div>
<div class="t" style="left:1566.40px;top:1298.86px;font-size:31px;color:#8a8a8a;font-weight:bold;transform:scaleX(1.0105);">Left</div>
<svg width="56" height="56" viewBox="-28 -28 56 56" style="left:1587.7px;top:676.9px"><circle r="25.2" fill="#004182" stroke="#d9d9d9" stroke-width="2.8"/><path d="M-8.5,-4.6 L0,-12.9 L8.5,-4.6 M-8.5,4.6 L0,12.9 L8.5,4.6" fill="none" stroke="#cfcfcf" stroke-width="2"/></svg>
<svg width="34" height="32" viewBox="0 0 34 32" style="left:431.8px;top:1631.7px" fill="none" stroke="#808080" stroke-width="2" stroke-linejoin="round" stroke-linecap="round"><path d="M17,2.2 L32,29.6 Q32.6,30.8 31.2,30.8 L2.8,30.8 Q1.4,30.8 2,29.6 Z"/><path d="M17,11.5 L17,21.5"/><circle cx="17" cy="26" r="0.6" stroke-width="1.8"/></svg>
<div class="t" style="left:474.40px;top:1636.64px;font-size:27px;color:#808080;transform:scaleX(1.1396);">Not intended to provide diagnosis. For prioritization only.</div>
<div class="box" style="left:1730px;top:20px;width:810px;height:953px;background:#1b1b1b;border:2px solid #2e2e2e;border-radius:21px"></div>
<svg width="2560" height="1813" viewBox="0 0 2560 1813" style="left:0;top:0" fill="none" stroke="#8f8f8f" stroke-width="2.5" stroke-linecap="round" stroke-linejoin="round">
<circle cx="2358.6" cy="84.9" r="12.3"/>
<path d="M2354.3,81.2 C2354.3,75.6 2363.2,75.6 2363.2,81 C2363.2,84.6 2358.6,84.6 2358.6,88.6" stroke-width="2.3"/><circle cx="2358.6" cy="92.8" r="0.9" stroke-width="1.8"/>
<path d="M2413.88,76.39 L2414.30,72.55 L2419.30,72.55 L2419.72,76.39 L2422.72,78.12 L2426.24,76.56 L2428.75,80.89 L2425.63,83.17 L2425.63,86.63 L2428.75,88.91 L2426.24,93.24 L2422.72,91.68 L2419.72,93.41 L2419.30,97.25 L2414.30,97.25 L2413.88,93.41 L2410.88,91.68 L2407.36,93.24 L2404.85,88.91 L2407.97,86.63 L2407.97,83.17 L2404.85,80.89 L2407.36,76.56 L2410.88,78.12Z" stroke-width="2.4"/>
<circle cx="2416.8" cy="84.9" r="3.7" stroke-width="2.4"/>
<path d="M2464,84.9 L2486.2,84.9" stroke-width="2.6" stroke-linecap="butt"/>
</svg>
<div class="t" style="left:1769.90px;top:157.53px;font-size:36px;color:#d2d2d2;transform:scaleX(0.9361);">John DOE</div>
<div class="t" style="left:2403.70px;top:159.56px;font-size:31px;color:#d2d2d2;transform:scaleX(1.0032);">50Y. M</div>
<div class="t" style="left:1769.10px;top:216.54px;font-size:27px;color:#868686;transform:scaleX(0.9936);">PID: 00.00000</div>
<div class="t" style="left:2274.80px;top:216.84px;font-size:27px;color:#868686;transform:scaleX(1.0076);">DOB: 14 Aug 1964</div>
<div class="box" style="left:1732px;top:282px;width:806px;height:90px;background:#0055bd;border:2px solid #0a6dff;border-radius:17px"></div>
<svg width="40" height="30" viewBox="0 0 40 30" style="left:1770px;top:313px" fill="none" stroke="#fff" stroke-width="2.4" stroke-linecap="round" stroke-linejoin="round"><path d="M8.5,9.6 L20.5,21.4 L32.5,9.6"/></svg>
<div class="t" style="left:1831.20px;top:312.21px;font-size:30px;color:#ffffff;font-weight:bold;">CT Brain</div>
<div class="box" style="left:2450px;top:304px;width:52px;height:45.4px;background:#fff;border-radius:23px"></div>
<div class="t" style="left:2468.60px;top:315.24px;font-size:27px;color:#4b2bb5;font-weight:bold;">5</div>
<div class="t" style="left:1767.80px;top:413.77px;font-size:26.5px;color:#7f7f7f;transform:scaleX(0.9630);">THINS SOFT, IDOSE (3)</div>
<div class="t" style="left:1767.80px;top:449.97px;font-size:26.5px;color:#7f7f7f;transform:scaleX(0.9937);">Series 201</div>
<div class="t" style="left:1917.20px;top:449.97px;font-size:26.5px;color:#7f7f7f;">|</div>
<div class="t" style="left:1939.40px;top:449.97px;font-size:26.5px;color:#7f7f7f;transform:scaleX(0.9851);">ACC: 00.00000</div>
<div class="box" style="left:1732px;top:514.6px;width:806px;height:71.8px;background:#2b2b2b;border-radius:17px 17px 0 0"></div>
<svg width="40" height="36" viewBox="0 0 40 36" style="left:1770.2px;top:531.5px"><path d="M17.6,3.2 Q20,-0.8 22.4,3.2 L37.6,30.2 Q39.2,34.4 35,34.6 L5,34.6 Q0.8,34.4 2.4,30.2 Z" fill="#fff"/><path d="M20,11.5 L20,23" stroke="#2b2b2b" stroke-width="3" stroke-linecap="round"/><circle cx="20" cy="28.6" r="2" fill="#2b2b2b"/></svg>
<div class="t" style="left:1831.50px;top:536.38px;font-size:30.5px;color:#ffffff;font-weight:bold;transform:scaleX(1.0491);">Priority</div>
<div class="box" style="left:2450.2px;top:528px;width:51.5px;height:44.8px;background:#1b1b1b;border-radius:23px"></div>
<div class="t" style="left:2468.30px;top:538.74px;font-size:27px;color:#dcdcdc;font-weight:bold;">3</div>
<svg width="30" height="40" viewBox="-15 -20 30 40" style="left:1773.4px;top:611.4px" fill="none" stroke="#c8c8c8" stroke-width="2.3" stroke-linecap="round" stroke-linejoin="round"><path d="M6.4,-12.2 L-6.2,0 L6.4,12.2"/></svg>
<div class="t" style="left:1831.60px;top:617.40px;font-size:30px;color:#c8c8c8;transform:scaleX(1.0869);">Mass effect</div>
<svg width="2560" height="1813" viewBox="0 0 2560 1813" style="left:0;top:0"><path d="M1732,674 L2530,674 Q2540,674 2540,684 L2540,740 Q2540,750 2530,750 L1732,750 Z" fill="#0a6dff"/><path d="M1732,674 Q1727,674 1724.5,678 L1706.5,708.5 Q1704.8,711.8 1706.5,715 L1724.5,746 Q1727,750 1732,750 Z" fill="#8f77f7"/><path d="M1732,676 L2529.5,676 Q2538,676 2538,684.5 L2538,739.5 Q2538,748 2529.5,748 L1732,748 L1728.5,747.2 L1709,713.6 Q1707.8,711.8 1709,710 L1728.5,676.8 Z" fill="#0055bd"/></svg>
<svg width="30" height="40" viewBox="-15 -20 30 40" style="left:1773.4px;top:691.8px" fill="none" stroke="#ffffff" stroke-width="2.3" stroke-linecap="round" stroke-linejoin="round"><path d="M6.4,-12.2 L-6.2,0 L6.4,12.2"/></svg>
<div class="t" style="left:1831.40px;top:697.90px;font-size:30px;color:#ffffff;transform:scaleX(1.1344);-webkit-text-stroke:0.5px #fff;">Obstructive hydrocephalus</div>
<svg width="30" height="40" viewBox="-15 -20 30 40" style="left:1773.4px;top:772.3px" fill="none" stroke="#c8c8c8" stroke-width="2.3" stroke-linecap="round" stroke-linejoin="round"><path d="M6.4,-12.2 L-6.2,0 L6.4,12.2"/></svg>
<div class="t" style="left:1830.60px;top:777.90px;font-size:30px;color:#c8c8c8;transform:scaleX(1.1197);">Acute subdural / epidural hematoma</div>
<div class="box" style="left:1732px;top:864.2px;width:806px;height:70.4px;background:#2b2b2b;border-radius:17px 17px 0 0"></div>
<svg width="30" height="40" viewBox="-15 -20 30 40" style="left:1776.5px;top:879.4px" fill="none" stroke="#fff" stroke-width="2.3" stroke-linecap="round" stroke-linejoin="round"><path d="M-6.4,-12.2 L6.2,0 L-6.4,12.2"/></svg>
<div class="t" style="left:1831.00px;top:884.68px;font-size:30.5px;color:#ffffff;font-weight:bold;transform:scaleX(1.0963);">Other</div>
<div class="box" style="left:2450.3px;top:877.9px;width:51.2px;height:43.8px;background:#1b1b1b;border-radius:23px"></div>
<div class="t" style="left:2468.30px;top:887.44px;font-size:27px;color:#dcdcdc;font-weight:bold;">2</div>
</body></html>
